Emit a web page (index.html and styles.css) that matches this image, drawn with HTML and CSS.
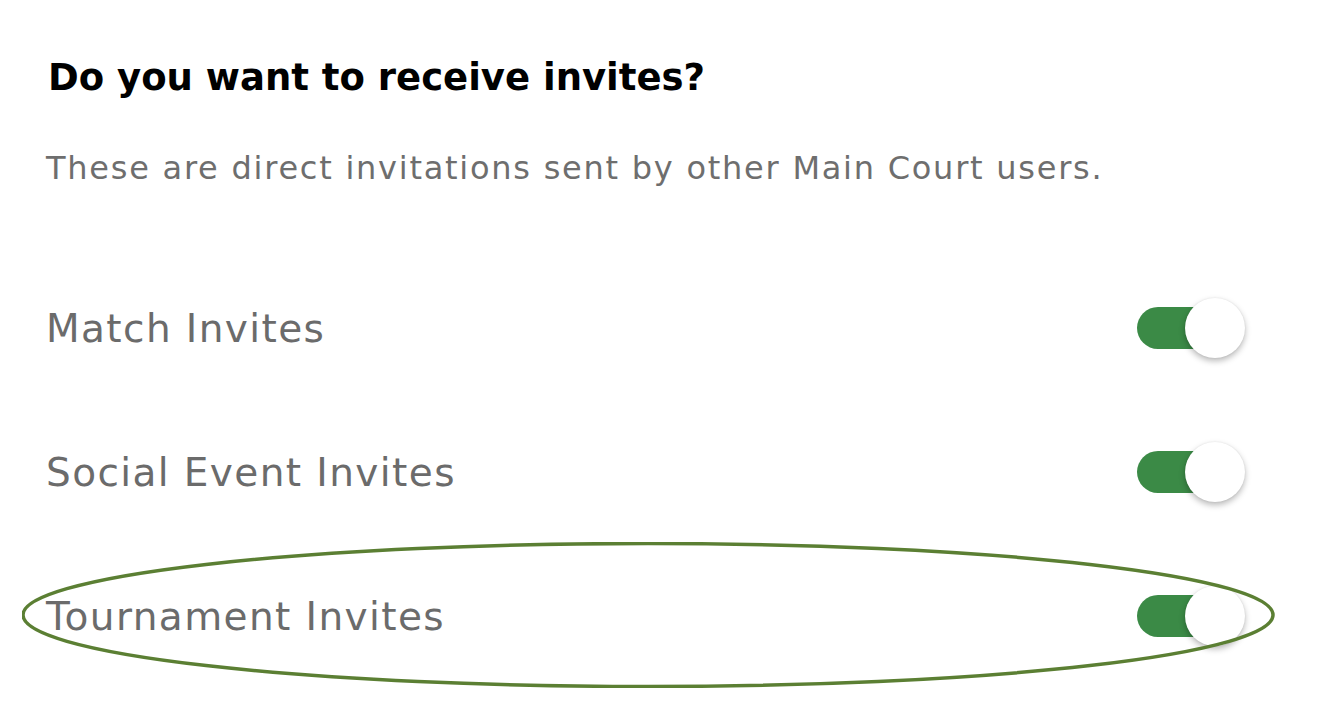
FILE: index.html
```html
<!DOCTYPE html>
<html lang="en">
<head>
<meta charset="utf-8">
<title>Invites</title>
<link rel="stylesheet" href="styles.css">
</head>
<body>
<main class="page">
  <h1 class="title">Do you want to receive invites?</h1>
  <p class="subtitle">These are direct invitations sent by other Main Court users.</p>
  <div class="rows">
    <div class="row">
      <span class="label">Match Invites</span>
      <span class="toggle"><span class="track"></span><span class="knob"></span></span>
    </div>
    <div class="row">
      <span class="label">Social Event Invites</span>
      <span class="toggle"><span class="track"></span><span class="knob"></span></span>
    </div>
    <div class="row row-marked">
      <span class="label">Tournament Invites</span>
      <span class="toggle"><span class="track"></span><span class="knob"></span></span>
      <svg class="mark" viewBox="0 0 1256 150" width="1256" height="150" aria-hidden="true">
        <ellipse cx="626" cy="73" rx="625" ry="71.5" fill="none" stroke="#5b7f33" stroke-width="3.5"/>
      </svg>
    </div>
  </div>
</main>
</body>
</html>
```
FILE: styles.css
```css
html, body {
  margin: 0;
  padding: 0;
  background: #ffffff;
}

.page {
  padding: 56px 75px 0 46px;
  font-family: "DejaVu Sans", Inter, sans-serif;
}

.title {
  margin: 0 0 48px 2px;
  font-size: 37px;
  line-height: 44px;
  font-weight: 700;
  color: #000000;
}

.subtitle {
  margin: 0;
  font-size: 32px;
  line-height: 40px;
  font-weight: 400;
  letter-spacing: 1.75px;
  color: #6e6e6e;
}

.rows {
  margin-top: 68px;
  display: flex;
  flex-direction: column;
}

.row {
  position: relative;
  height: 144px;
  display: flex;
  align-items: center;
  justify-content: space-between;
}

.label {
  font-size: 39px;
  color: #6b6b6b;
  font-weight: 400;
  letter-spacing: 1.4px;
}

.toggle {
  position: relative;
  width: 108px;
  height: 60px;
  display: flex;
  align-items: center;
}

.track {
  width: 78px;
  height: 42px;
  border-radius: 21px;
  background: #3b8a46;
}

.knob {
  position: absolute;
  right: 0;
  top: 0;
  width: 60px;
  height: 60px;
  border-radius: 50%;
  background: #ffffff;
  box-shadow: 0 3px 6px rgba(0, 0, 0, 0.28), 0 0 2px rgba(0, 0, 0, 0.08);
}

.mark {
  position: absolute;
  left: -24px;
  top: -2px;
  pointer-events: none;
}
```
